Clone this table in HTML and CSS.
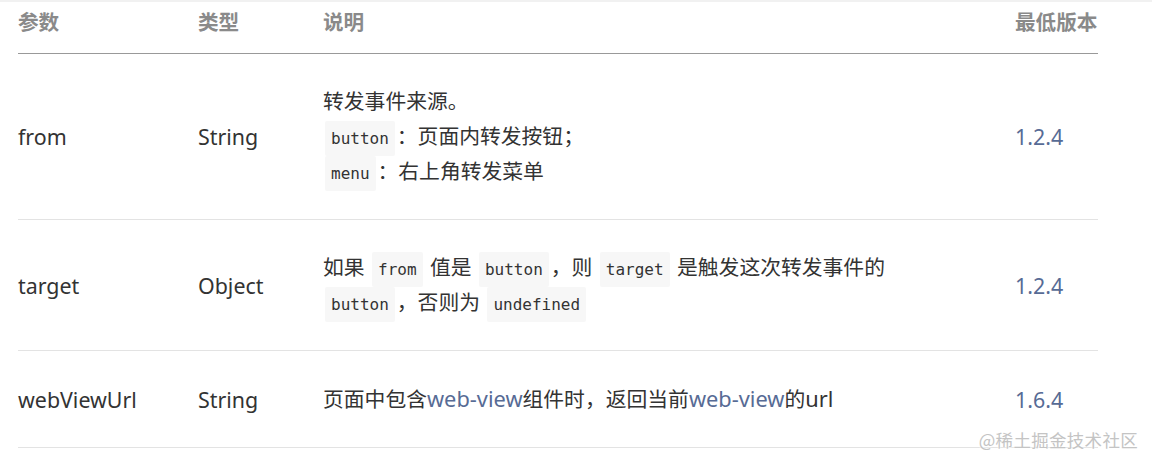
FILE: index.html
```html
<!DOCTYPE html>
<html lang="zh-CN">
<head>
<meta charset="utf-8">
<title>参数</title>
<link rel="stylesheet" href="styles.css">
</head>
<body>
<div class="page">
  <table class="params">
    <colgroup>
      <col class="c-name">
      <col class="c-type">
      <col class="c-desc">
      <col class="c-ver">
    </colgroup>
    <thead>
      <tr>
        <th>参数</th>
        <th>类型</th>
        <th>说明</th>
        <th>最低版本</th>
      </tr>
    </thead>
    <tbody>
      <tr>
        <td class="latin">from</td>
        <td class="latin">String</td>
        <td class="desc">转发事件来源。<br><code>button</code>：页面内转发按钮；<br><code>menu</code>：右上角转发菜单</td>
        <td class="latin ver">1.2.4</td>
      </tr>
      <tr>
        <td class="latin">target</td>
        <td class="latin">Object</td>
        <td class="desc">如果 <code>from</code> 值是 <code>button</code>，则 <code>target</code> 是触发这次转发事件的 <code>button</code>，否则为 <code>undefined</code></td>
        <td class="latin ver">1.2.4</td>
      </tr>
      <tr>
        <td class="latin">webViewUrl</td>
        <td class="latin">String</td>
        <td class="desc">页面中包含<a class="link" href="#">web-view</a>组件时，返回当前<a class="link" href="#">web-view</a>的<span class="word">url</span></td>
        <td class="latin ver">1.6.4</td>
      </tr>
    </tbody>
  </table>
  <div class="watermark">@稀土掘金技术社区</div>
</div>
</body>
</html>
```

FILE: styles.css
```css
html, body {
  margin: 0;
  padding: 0;
  background: #fff;
}

body {
  border-top: 2px solid #f1f1f1;
  font-family: "Noto Sans", "Noto Sans CJK SC", sans-serif;
  color: #333;
}

.page {
  position: relative;
  height: 463px;
  padding-left: 18px;
}

.params {
  width: 1080px;
  table-layout: fixed;
  border-collapse: collapse;
  font-size: 20px;
}

.c-name { width: 180px; }
.c-type { width: 125px; }
.c-desc { width: 692px; }
.c-ver  { width: 83px; }

.params th {
  text-align: left;
  font-weight: bold;
  font-size: 20.6px;
  color: #8a8a8a;
  line-height: 28px;
  padding: 5px 0 18px;
  border-bottom: 1px solid #999;
  font-family: "Noto Sans CJK SC", sans-serif;
  white-space: nowrap;
}

.params td {
  padding: 30px 0;
  line-height: 35px;
  vertical-align: middle;
  border-bottom: 1px solid #e3e3e3;
}

.params td.latin {
  font-size: 21.4px;
}

.params td.desc {
  padding-right: 80px;
  font-size: 20.8px;
}

.params td.ver {
  color: #576b95;
}

.params code {
  font-family: "DejaVu Sans Mono", monospace;
  font-size: 16px;
  line-height: 1;
  color: #333;
  background: #f7f7f7;
  padding: 8px 6px;
  margin: 0 2px;
  border-radius: 2px;
}

.link {
  color: #576b95;
  text-decoration: none;
  font-size: 21.8px;
}

.word {
  font-size: 21.8px;
}

.watermark {
  position: absolute;
  right: 14px;
  top: 425px;
  font-family: "Noto Sans CJK SC", sans-serif;
  font-size: 17.5px;
  color: #c4c4c4;
  letter-spacing: 0.3px;
  text-shadow: 0 0 2px #fff, 0 0 2px #fff;
}
```
